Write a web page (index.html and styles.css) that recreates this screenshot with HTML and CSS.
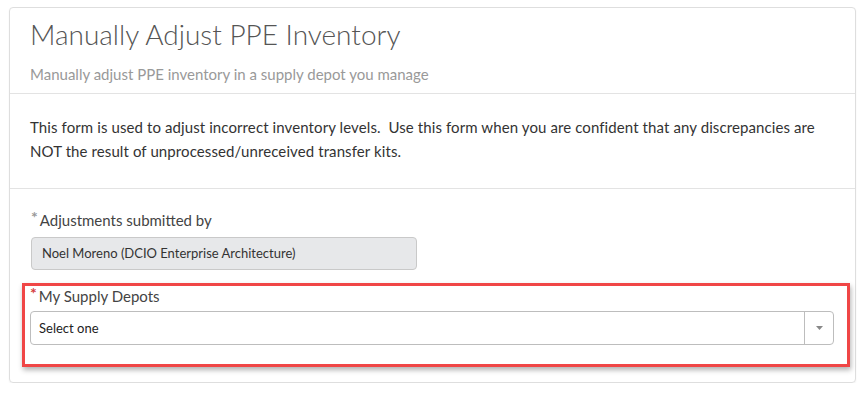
FILE: index.html
```html
<!DOCTYPE html>
<html lang="en">
<head>
    <meta charset="UTF-8">
    <title>Manually Adjust PPE Inventory</title>
    <link rel="stylesheet" href="styles.css">
</head>
<body>
    <div class="card">
        <div class="card-header">
            <h1>Manually Adjust PPE Inventory</h1>
            <p class="subtitle">Manually adjust PPE inventory in a supply depot you manage</p>
        </div>

        <div class="card-intro">
            <p>This form is used to adjust incorrect inventory levels.&nbsp; Use this form when you are confident that any discrepancies are NOT the result of unprocessed/unreceived transfer kits.</p>
        </div>

        <form class="card-form">
            <div class="field">
                <label><span class="req">*</span>Adjustments submitted by</label>
                <div class="input readonly">Noel Moreno (DCIO Enterprise Architecture)</div>
            </div>

            <div class="highlight">
                <div class="field">
                    <label><span class="req req-red">*</span>My Supply Depots</label>
                    <div class="select">
                        <span class="select-value">Select one</span>
                        <span class="select-arrow">
                            <svg width="7" height="4" viewBox="0 0 7 4"><path d="M0 0h7L3.5 4z" fill="#888"/></svg>
                        </span>
                    </div>
                </div>
            </div>
        </form>
    </div>
</body>
</html>
```

FILE: styles.css
```css
* {
    margin: 0;
    padding: 0;
    box-sizing: border-box;
}

body {
    font-family: Lato, "Open Sans", sans-serif;
    color: #333;
    background: #fff;
    padding: 7px 6px 0 9px;
}

.card {
    width: 847px;
    height: 376px;
    border: 1px solid #dedede;
    border-radius: 4px;
    box-shadow: 0 1px 2px rgba(0,0,0,0.06);
}

.card-header {
    height: 86px;
    padding: 8px 20px 0;
    border-bottom: 1px solid #e3e3e3;
}

.card-header h1 {
    font-size: 28px;
    font-weight: 300;
    color: #555;
    line-height: 36px;
}

.subtitle {
    margin-top: 13px;
    font-size: 15px;
    color: #999;
    line-height: 18px;
}

.card-intro {
    height: 95px;
    padding: 21px 20px 0;
    border-bottom: 1px solid #e3e3e3;
}

.card-intro p {
    font-size: 15px;
    line-height: 24px;
    color: #333;
    letter-spacing: 0.1px;
}

.card-form {
    padding: 21px 5px 0 12px;
}

.field label {
    display: block;
    font-size: 15px;
    line-height: 20px;
    color: #444;
    margin-bottom: 7px;
}

.card-form > .field {
    padding-left: 9px;
}

.req {
    color: #999;
    font-size: 16px;
    font-weight: 700;
    line-height: 0;
    vertical-align: 3px;
    margin-right: 2px;
}

.req-red {
    color: #d43f3f;
}

.input {
    height: 33px;
    width: 386px;
    border: 1.5px solid #c9c9c9;
    border-radius: 4px;
    padding: 0 10px;
    font-size: 13px;
    line-height: 30px;
}

.readonly {
    background: #e7e8ea;
    color: #333;
}

.highlight {
    margin-top: 13px;
    height: 84px;
    border: 3px solid #f04646;
    box-shadow: 1px 3px 5px rgba(0,0,0,0.3);
    padding: 0 13px 0 5px;
}

.highlight .field label {
    margin-bottom: 5px;
}

.select {
    display: flex;
    height: 34px;
    border: 1px solid #bdbdbd;
    border-radius: 4px;
    font-size: 13px;
    color: #222;
}

.select-value {
    flex: 1;
    padding-left: 8px;
    line-height: 32px;
}

.select-arrow {
    width: 29px;
    border-left: 1px solid #bdbdbd;
    display: flex;
    align-items: center;
    justify-content: center;
}
```
